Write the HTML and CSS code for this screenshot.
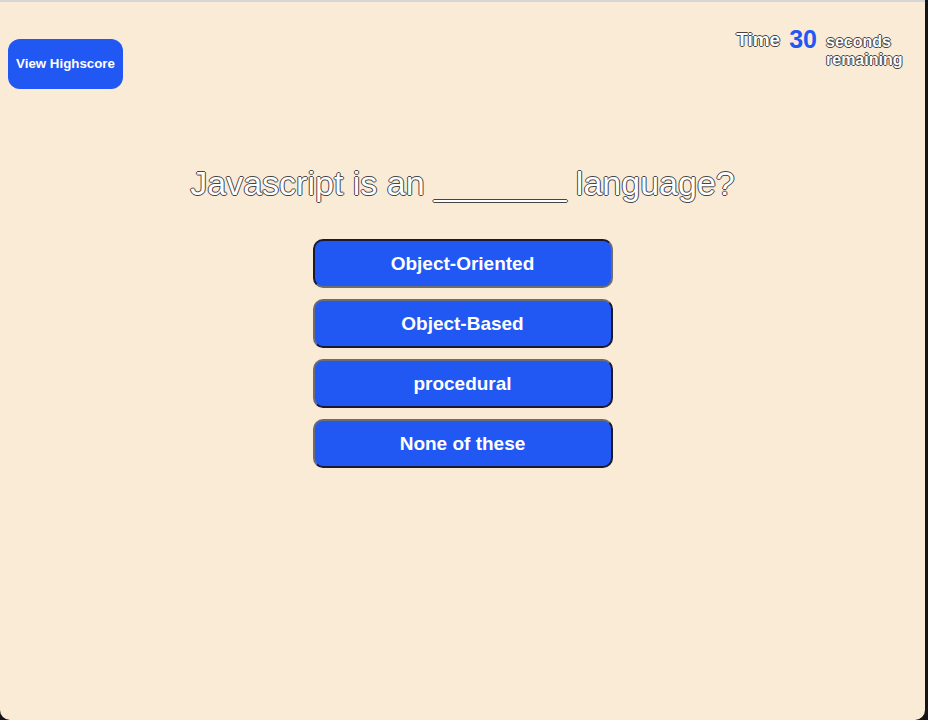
FILE: index.html
```html
<!DOCTYPE html>
<html lang="en">
<head>
<meta charset="utf-8">
<title>Quiz</title>
<link rel="stylesheet" href="styles.css">
</head>
<body>
<div class="window">
  <header class="topbar">
    <button class="highscore-btn">View Highscore</button>
    <div class="timer">
      <span class="timer-label">Time</span>
      <span class="timer-count">30</span>
      <span class="timer-suffix">seconds remaining</span>
    </div>
  </header>
  <main class="quiz">
    <h1 class="question">Javascript is an _______ language?</h1>
    <div class="choices">
      <button class="choice choice-active">Object-Oriented</button>
      <button class="choice">Object-Based</button>
      <button class="choice">procedural</button>
      <button class="choice">None of these</button>
    </div>
  </main>
</div>
</body>
</html>
```
FILE: styles.css
```css
html {
  background: #151515;
}
body {
  margin: 0;
  font-family: "Liberation Sans", Arial, sans-serif;
}
.window {
  width: 925px;
  height: 720px;
  box-sizing: border-box;
  background: #faebd7;
  border-top: 2px solid #d6d6d6;
  border-radius: 0 0 10px 10px;
  overflow: hidden;
}
.topbar {
  display: flex;
  justify-content: space-between;
  align-items: flex-start;
  padding: 0 19px 0 8px;
}
.highscore-btn {
  margin-top: 37px;
  width: 115px;
  height: 50px;
  background: #2157f3;
  color: #fff;
  border: none;
  border-radius: 12px;
  font-family: "Liberation Sans", Arial, sans-serif;
  font-weight: bold;
  font-size: 13.3px;
  padding: 0 0 2px;
}
.timer {
  display: flex;
  align-items: flex-start;
  margin-top: 23px;
  color: #fff;
}
.timer-label,
.timer-suffix,
.question {
  color: #fff;
  text-shadow: -1px 0 0 #444, 1px 0 0 #444, 0 -1px 0 #444, 0 1px 0 #444;
}
.timer-label {
  font-size: 19px;
  font-weight: bold;
  margin-top: 4px;
  margin-right: 9px;
}
.timer-count {
  font-size: 25px;
  font-weight: bold;
  color: #2157f3;
  margin-right: 9px;
}
.timer-suffix {
  width: 80px;
  font-size: 16px;
  font-weight: bold;
  line-height: 18px;
  margin-top: 8px;
}
.quiz {
  display: flex;
  flex-direction: column;
  align-items: center;
}
.question {
  margin: 74px 0 0;
  font-size: 34px;
  font-weight: normal;
  line-height: 40px;
}
.choices {
  display: flex;
  flex-direction: column;
  gap: 11px;
  margin-top: 36px;
}
.choice {
  width: 300px;
  height: 49px;
  background: #2157f3;
  color: #fff;
  font-family: "Liberation Sans", Arial, sans-serif;
  font-weight: bold;
  font-size: 19px;
  border-radius: 10px;
  border: 2px solid;
  border-color: #6d6d70 #1a1a2a #1a1a2a #6d6d70;
  padding: 1px 0 0;
}
.choice-active {
  border-color: #1a1a2a #6d6d70 #6d6d70 #1a1a2a;
}
```
